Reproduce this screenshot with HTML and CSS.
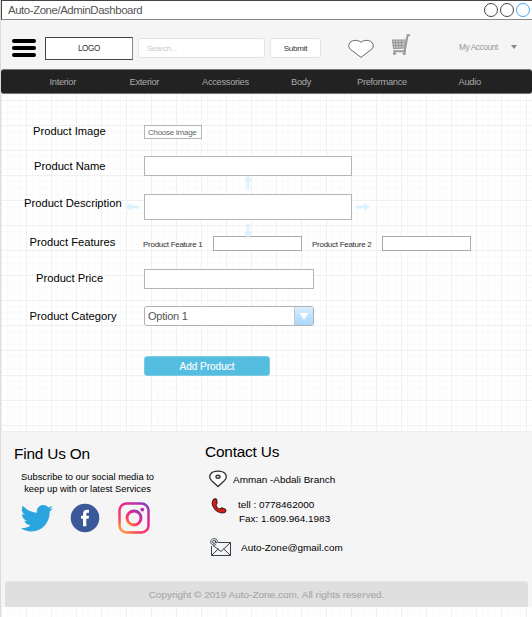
FILE: index.html
```html
<!DOCTYPE html>
<html lang="en">
<head>
<meta charset="utf-8">
<title>Auto-Zone/AdminDashboard</title>
<link rel="stylesheet" href="styles.css">
</head>
<body>
<div class="window">
  <div class="titlebar">
    <span class="title">Auto-Zone/AdminDashboard</span>
    <span class="dot"></span><span class="dot"></span><span class="dot blue"></span>
  </div>
  <header class="header">
    <div class="burger"><i></i><i></i><i></i></div>
    <div class="logo">LOGO</div>
    <div class="search">Search...</div>
    <div class="submit">Submit</div>
    <svg class="heart" width="26" height="20" viewBox="0 0 26 20"><path d="M13 3.3C10 .6 4.500.8 2 3.500C.2 5.600.4 8.300 2.300 10.200L13 18.400L23.700 10.200C25.600 8.300 25.800 5.600 24 3.500C21.500.8 16 .6 13 3.300Z" fill="#fff" stroke="#666"/></svg>
    <svg class="cart" width="20" height="22" viewBox="0 0 20 22"><path d="M1 6H15L14 14.500L2.500 15Z" fill="#c4c4c4"/><path d="M1 6H15M1.500 6L2.500 14.800L13.500 13.800M1.500 8.700H14.500M2 11.500H14M4.500 6V14M7.500 6V14M10.500 6V14" fill="none" stroke="#999" stroke-width="1"/><path d="M19 1.200H16.600L13.700 16.500M2.200 17.300H15" fill="none" stroke="#999" stroke-width="2"/><circle cx="3.500" cy="19.500" r="1.600" fill="#999"/><circle cx="13.300" cy="19.500" r="1.600" fill="#999"/></svg>
    <div class="account">My Account</div>
    <span class="caret"></span>
  </header>
  <nav class="nav"><span>Interior</span><span>Exterior</span><span>Accessories</span><span>Body</span><span>Preformance</span><span>Audio</span></nav>
  <main class="form">
    <div class="row image"><label>Product Image</label><div class="file">Choose Image</div></div>
    <div class="row name"><label>Product Name</label><div class="field wide"></div></div>
    <div class="row description"><label>Product Description</label><div class="field area">
      <svg class="arrow up" viewBox="0 0 14 8"><path d="M0 4L6 0V2.500H14V5.500H6V8Z"/></svg>
      <svg class="arrow down" viewBox="0 0 14 8"><path d="M0 4L6 0V2.500H14V5.500H6V8Z"/></svg>
      <svg class="arrow left" viewBox="0 0 14 8"><path d="M0 4L6 0V2.500H14V5.500H6V8Z"/></svg>
      <svg class="arrow right" viewBox="0 0 14 8"><path d="M0 4L6 0V2.500H14V5.500H6V8Z"/></svg>
    </div></div>
    <div class="row features"><label>Product Features</label><span class="sub">Product Feature 1</span><div class="field small"></div><span class="sub second">Product Feature 2</span><div class="field small"></div></div>
    <div class="row price"><label>Product Price</label><div class="field medium"></div></div>
    <div class="row category"><label>Product Category</label><div class="select"><span>Option 1</span><b><svg width="10" height="7" viewBox="0 0 10 7"><path d="M.5 0H9.500L5 7Z" fill="#fff"/></svg></b></div></div>
    <div class="add">Add Product</div>
  </main>
  <footer class="footer">
    <div class="columns">
      <section class="find">
        <h2>Find Us On</h2>
        <p>Subscribe to our social media to<br>keep up with or latest Services</p>
        <div class="social">
          <svg class="twitter" width="34" height="29" viewBox="0 0 34 29"><path d="M33 4.200Q31.300 5 29.800 5.200Q31.500 4 32.200 1.800Q30.300 3 28.200 3.400C26 .7 21.700.2 18.900 2.700C17 4.400 16.500 6.700 17 8.800C11.200 8.500 6.400 5.900 2.900 1.700C1 5 1.700 8.800 5 10.800Q3.300 10.700 2 10C2 13.500 4.300 15.900 7.300 16.600Q5.900 17 4.300 16.800C5.200 19.500 7.600 21.200 10.500 21.200C7.500 23.600 4.200 24.400.8 24.200C4 26.300 7.500 27.500 11.500 27.400C23 27.300 29.900 18 29.700 7.600Q31.700 6.200 33 4.200Z" fill="#2ba5df"/></svg>
          <svg class="facebook" width="30" height="30" viewBox="0 0 30 30"><circle cx="15" cy="15" r="14.300" fill="#3b5998"/><path d="M13 23.200V15.800H11V12.800H13V11C13 8.200 14.500 6.700 17.200 6.700H19V9.700H17.600C16.500 9.700 16.300 10.300 16.300 11.200V12.800H19L18.600 15.800H16.300V23.200Z" fill="#fff"/></svg>
          <svg class="instagram" width="32" height="32" viewBox="0 0 32 32"><defs><linearGradient id="ig" x1="0" y1="1" x2=".8" y2="0"><stop offset="0" stop-color="#ffb02e"/><stop offset=".3" stop-color="#fb4058"/><stop offset=".65" stop-color="#ee258b"/><stop offset="1" stop-color="#9438b5"/></linearGradient></defs><g fill="none" stroke="url(#ig)"><rect x="1.500" y="1.500" width="29" height="29" rx="7" stroke-width="2.500"/><circle cx="16" cy="16" r="7" stroke-width="2.900"/></g><circle cx="24.300" cy="7.600" r="1.900" fill="#b72fa5"/></svg>
        </div>
      </section>
      <section class="contact">
        <h2>Contact Us</h2>
        <div class="line address"><svg width="18" height="18" viewBox="0 0 18 18"><path d="M9 16.500L3 11C.5 8.600.3 5.500 2 3.500C4.500.3 13.500.3 16 3.500C17.700 5.500 17.500 8.600 15 11Z" fill="#fff" stroke="#333" stroke-width="1.300"/><ellipse cx="9" cy="6.700" rx="2.100" ry="1.600" fill="#bbb" stroke="#333" stroke-width="1.200"/></svg><span>Amman -Abdali Branch</span></div>
        <div class="line phone"><svg width="16" height="16" viewBox="0 0 16 16"><path d="M2.500 1.500C4 .4 5.500.7 5.800 2.200L6 5C5.900 6.200 4.800 6.500 5.100 7.700C5.700 9.500 7 10.800 8.700 11C9.700 11 10 9.600 11.200 9.900L14.200 11.200C15.300 12 14.900 13.800 13.500 14.500C6 16.500-1.500 7.500 2.500 1.500Z" fill="#d91e18" stroke="#421719" stroke-width="1.100"/></svg><div>tell : 0778462000<br><span class="fax">Fax: 1.609.964.1983</span></div></div>
        <div class="line mail"><svg width="23" height="20" viewBox="0 0 23 20"><g fill="none" stroke="#38414f"><path d="M8 4.500H20.500V17.500H1.500V8M1.500 17.500L8.500 10.700M20.500 17.500L13.500 10.700M3 7.500L11 13.500L20.500 4.500"/><path d="M5.700 2.400V4.600Q7.500 5.500 7.500 3.500C7.300 1.500 5.700.6 4.100.6C1.900.6.6 2.300.7 4.100C.9 6.700 3.400 7.700 6.100 6.700" stroke-width=".9"/><circle cx="4.100" cy="3.900" r="1.500" stroke-width=".9"/></g></svg><span>Auto-Zone@gmail.com</span></div>
      </section>
    </div>
    <div class="copyright">Copyright © 2019 Auto-Zone.com. All rights reserved.</div>
  </footer>
</div>
</body>
</html>
```
FILE: styles.css
```css
* { box-sizing: border-box; }
body {
  margin: 0;
  font-family: "Liberation Sans", Arial, sans-serif;
  color: #000;
  background-color: #fff;
  background-image:
    linear-gradient(90deg, #f0f0f0 1px, transparent 1px),
    linear-gradient(#f0f0f0 1px, transparent 1px),
    linear-gradient(90deg, #f9f9f9 1px, transparent 1px),
    linear-gradient(#f9f9f9 1px, transparent 1px);
  background-size: 25px 25px, 25px 25px, 6.25px 6.25px, 6.25px 6.25px;
  background-position: 1px 0;
}
.window { height: 617px; border-left: 1px solid #dcdcdc; overflow: hidden; white-space: nowrap; }
.titlebar {
  height: 20px; display: flex; align-items: center; gap: 2px; padding: 0 2px 0 6px;
  background: #fff; border: solid #444; border-width: 1px 0 1px 1px; border-bottom-color: #888;
}
.title { flex: 1; font-size: 11.4px; letter-spacing: -.42px; color: #555; }
.dot { width: 14px; height: 14px; border: 1px solid #444; border-radius: 50%; }
.dot.blue { border-color: #45a5f5; }
.header { height: 49px; display: flex; align-items: center; background: #f5f5f5; padding: 0 15px 0 11px; }
.burger { width: 24px; height: 18px; display: flex; flex-direction: column; justify-content: space-between; margin-top: 7px; }
.burger i { height: 4px; border-radius: 2px; background: #000; }
.logo {
  width: 88px; height: 23px; margin: 7px 0 0 9px; border: 1px solid #444; border-right-color: #888;
  background: #fff; color: #333; font-size: 8.2px; letter-spacing: -.4px; line-height: 21px; text-align: center;
}
.search, .submit { height: 20px; margin-top: 7px; background: #fff; border: 1px solid #e4e4e4; border-radius: 3px; font-size: 8.1px; letter-spacing: -.28px; line-height: 19px; }
.search { width: 127px; margin-left: 5px; padding-left: 8px; color: #ccc; }
.submit { width: 51px; margin-left: 5px; text-align: center; color: #333; }
.heart { margin: 8px 0 0 27px; }
.cart { margin: 0 0 0 17px; }
.account { margin: 5px 0 0 48px; width: 41px; font-size: 8.3px; letter-spacing: -.4px; color: #999; }
.caret { margin: 4px 0 0 11px; border: solid transparent; border-width: 4px 3px 0; border-top-color: #888; }
.nav { height: 25px; border-radius: 3px; background: #222; border-top: 1px solid #777; border-bottom: 1px solid #777; display: flex; align-items: center; color: #aaa; font-size: 9.3px; letter-spacing: -.3px; padding-top: 1px; padding-left: 48.5px; }
.nav span { flex: none; width: 80px; }
.nav span:nth-child(2) { width: 72.5px; }
.nav span:nth-child(3) { width: 89px; }
.nav span:nth-child(4) { width: 66px; }
.nav span:nth-child(5) { width: 101.5px; }
.form { height: 337px; padding-top: 29px; display: flex; flex-direction: column; align-items: flex-start; }
.row { display: flex; align-items: center; }
.row label { width: 143px; font-size: 11.2px; padding-left: 32px; }
.row.image { height: 18px; }
.row.name { height: 20px; margin-top: 15px; }
.row.description { height: 26px; margin-top: 18px; }
.row.features { height: 15px; margin-top: 16px; }
.row.price { height: 20px; margin-top: 18px; }
.row.category { height: 20px; margin-top: 17px; }
.row.name label { padding-left: 33px; }
.row.description label { padding-left: 23px; padding-bottom: 8px; }
.row.features label { width: 142px; padding-left: 28.5px; padding-bottom: 4px; }
.row.price label { padding-left: 35px; padding-bottom: 2px; }
.row.category label { padding-left: 28.5px; }
.row.image label { padding-bottom: 3px; }
.file { width: 58px; height: 14px; border: 1px solid #b5b5b5; background: #fff; color: #666; font-size: 8px; letter-spacing: -.3px; line-height: 13px; padding-left: 3px; }
.field { background: #fff; border: 1px solid #b5b5b5; height: 20px; }
.wide { width: 208px; }
.area { width: 208px; height: 26px; position: relative; }
.medium { width: 170px; }
.small { width: 89px; height: 15px; border-color: #aaa; }
.sub { width: 70px; font-size: 8px; letter-spacing: -.27px; color: #333; padding-top: 1px; }
.sub.second { margin-left: 10px; }
.arrow { position: absolute; width: 14px; height: 8px; fill: #dcf2fe; }
.arrow.left { left: -20px; top: 8px; }
.arrow.right { right: -19px; top: 8px; transform: rotate(180deg); }
.arrow.up { left: 96px; top: -17px; transform: rotate(90deg); }
.arrow.down { left: 96px; top: 32px; transform: rotate(-90deg); }
.select { width: 170px; height: 20px; display: flex; border: 1px solid #b0b0b0; border-radius: 3px; background: #fff; overflow: hidden; font-size: 11px; letter-spacing: -.25px; line-height: 19px; color: #555; }
.select span { flex: 1; padding-left: 3px; }
.select b { width: 19px; border-left: 1px solid #c4c4c4; background: linear-gradient(#d8edfd, #aad7fb); display: flex; align-items: center; justify-content: center; }
.add { width: 126px; height: 20px; margin: 30px 0 0 143px; border: 1px solid #7ccbe5; border-radius: 3px; background: #54bde0; color: #fff; font-size: 10px; line-height: 19px; text-align: center; -webkit-text-stroke: .15px #fff; }
.footer { height: 176px; background: #f5f5f5; border-top: 1px solid #e6f0f5; border-bottom: 1px solid #e6f3fa; border-radius: 3px; padding: 0 4px; }
.columns { display: flex; height: 149px; }
.find { width: 200px; padding: 13px 0 0 9px; }
.contact { padding-top: 11px; }
h2 { margin: 0; font-size: 15.4px; letter-spacing: -.2px; font-weight: 400; line-height: 18px; }
p { margin: 8px 0 0 0; width: 147px; text-align: center; font-size: 9.35px; line-height: 12px; }
.social { display: flex; align-items: center; margin: 7px 0 0 6px; height: 32px; }
.facebook { margin-left: 16px; }
.instagram { margin-left: 18px; }
.line { display: flex; align-items: center; font-size: 9.95px; line-height: 14px; }
.line svg { flex: none; }
.address { height: 18px; margin: 9px 0 0 3.5px; }
.address span { margin-left: 6.5px; padding-top: 2px; }
.phone { margin: 8.5px 0 0 5.5px; align-items: flex-start; }
.phone svg { margin-top: 1px; }
.phone div { margin: 1.5px 0 0 11.5px; }
.fax { margin-left: 1px; }
.mail { height: 20px; margin: 11.5px 0 0 4.5px; }
.mail span { margin-left: 8.5px; }
.copyright { height: 26px; border-radius: 3px; background: #dfdfdf; border-top: 1px solid #e6e6e6; color: #aaa; font-size: 9.98px; line-height: 25px; text-align: center; -webkit-text-stroke: .15px #aaa; }
```
